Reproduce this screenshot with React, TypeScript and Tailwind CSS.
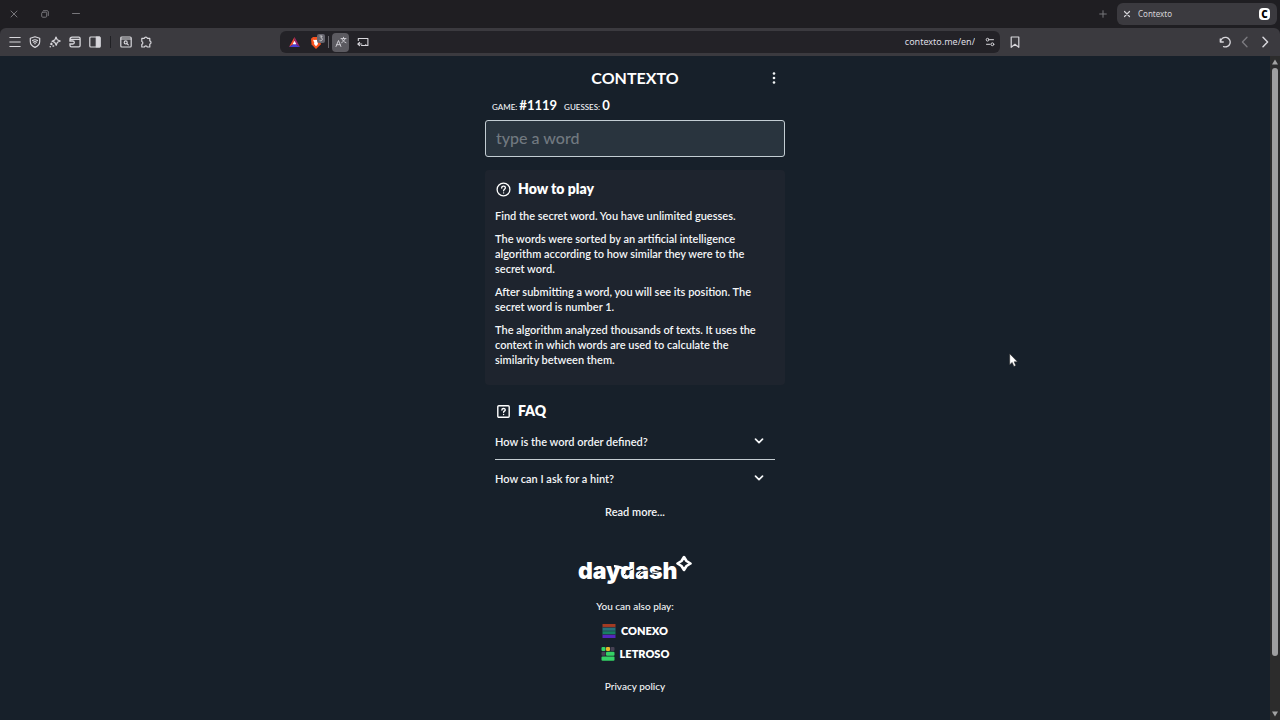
import type { ReactNode } from "react";

function Icon({ className, box = "0 0 24 24", width = 2, children }: { className?: string; box?: string; width?: number; children: ReactNode }) {
  return (
    <svg className={className} viewBox={box} fill="none" stroke="currentColor" strokeWidth={width} strokeLinecap="round" strokeLinejoin="round" aria-hidden="true">
      {children}
    </svg>
  );
}

function ToolButton({ label, className = "", children }: { label: string; className?: string; children: ReactNode }) {
  return (
    <button type="button" aria-label={label} className={`flex h-5 w-5 shrink-0 items-center justify-center ${className}`}>
      {children}
    </button>
  );
}

function TabStrip() {
  return (
    <div className="flex h-7 items-center justify-between bg-[#1f1e22] pr-[3px] pl-1 text-[#77767b]">
      <div className="flex gap-[11px]">
        <ToolButton label="Close window">
          <Icon className="h-2 w-2" box="0 0 8 8" width={1}><path d="M1 1l6 6M7 1L1 7" /></Icon>
        </ToolButton>
        <ToolButton label="Restore window">
          <Icon className="h-2 w-2" box="0 0 8 8" width={1}>
            <rect x="0.7" y="2.2" width="5" height="5" rx="1" />
            <path d="M2.5.7h3.7a1.1 1.1 0 0 1 1.1 1.1v3.7" />
          </Icon>
        </ToolButton>
        <ToolButton label="Minimize window">
          <Icon className="h-2 w-2" box="0 0 8 8" width={1}><path d="M.5 3.5h7" /></Icon>
        </ToolButton>
      </div>
      <div className="flex items-center gap-1">
        <ToolButton label="New tab">
          <Icon className="h-2 w-2" box="0 0 8 8" width={1}><path d="M4 .7v6.6M.7 4h6.6" /></Icon>
        </ToolButton>
        <div className="flex h-[22px] w-40 items-center rounded-md bg-[#3b3a3f] pr-[7px] text-[#d5d4d8]">
          <ToolButton label="Close tab">
            <Icon className="h-2 w-2" box="0 0 8 8" width={1.2}><path d="M1.5 1.5l5 5M6.5 1.5l-5 5" /></Icon>
          </ToolButton>
          <span className="ml-px flex-1 font-['Noto_Sans',sans-serif] text-[8px] leading-3">Contexto</span>
          <span className="flex h-3 w-[11px] items-center justify-center rounded-sm bg-white font-['Open_Sans',sans-serif] text-[10px] leading-3 font-extrabold text-black">C</span>
        </div>
      </div>
    </div>
  );
}

function Toolbar() {
  return (
    <div className="flex h-7 items-center rounded-t-md bg-[#3b3a3f] px-[5px] text-[#d8d7dc]">
      <div className="flex flex-1 items-center">
        <ToolButton label="Menu">
          <Icon className="h-3 w-3" box="0 0 12 12" width={1}><path d="M.8 1.5h10.4M.8 6h10.4M.8 10.5h10.4" /></Icon>
        </ToolButton>
        <ToolButton label="Protection">
          <Icon className="h-3 w-3" box="0 0 12 12" width={1.2}>
            <path d="M6 .7l4.7 1.5v3.3c0 2.8-1.8 4.7-4.7 5.9-2.9-1.2-4.7-3.1-4.7-5.9V2.2z" />
            <path d="M3.6 4.6c1.4-1 3.4-1 4.8 0M4.4 6.2c.9-.7 2.3-.7 3.2 0M5.8 7.7h.4" />
          </Icon>
        </ToolButton>
        <ToolButton label="Assistant">
          <Icon className="h-3 w-3" box="0 0 12 12" width={1.2}>
            <path d="M7 1l1.2 2.8L11.2 5 8.4 6.2 7.2 9.3 5.9 6.4 3 5.2l2.9-1.3z" />
            <path d="M2.4 7.2v1.4M1.7 7.9h1.4M1.2 10.8h.1M4 10h.6" strokeWidth="1.5" />
          </Icon>
        </ToolButton>
        <ToolButton label="Wallet">
          <Icon className="h-3 w-3" box="0 0 12 12" width={1.3}>
            <path d="M1 4.6V3.4C1 2 2.2 1.2 3.2 1.2h6.6c.8 0 1.3.6 1.3 1.3v7c0 .8-.5 1.3-1.3 1.3H2.4c-.8 0-1.4-.5-1.4-1.3v-.6M1.8 3.4h9.2M.8 5h3a1.4 1.4 0 0 1 0 3h-3" />
          </Icon>
        </ToolButton>
        <ToolButton label="Sidebar">
          <Icon className="h-3 w-3" box="0 0 12 12" width={1.2}>
            <rect x=".8" y="1" width="10.4" height="10" rx="1" />
            <path d="M7.3 1h3.4v10H7.3z" fill="currentColor" />
          </Icon>
        </ToolButton>
        <span className="mx-[5px] h-3 w-px bg-[#202024]" />
        <ToolButton label="Search tabs">
          <Icon className="h-3 w-3" box="0 0 12 12" width={1.2}>
            <rect x=".8" y="1" width="10.4" height="10" rx="1" />
            <path d="M1 3h10" />
            <circle cx="5.7" cy="6.4" r="1.5" />
            <path d="M7 7.7l1.3 1.2" />
          </Icon>
        </ToolButton>
        <ToolButton label="Extensions">
          <Icon className="h-3 w-3" box="0 0 12 12" width={1.2}>
            <path d="M1.8 2.4h2.5a1.6 1.6 0 0 1 3.1 0h2.4v2.5a1.6 1.6 0 0 1 0 3.1v3H7.3a1.5 1.5 0 0 0-2.9 0H1.8V8.4a1.6 1.6 0 0 0 0-3z" />
          </Icon>
        </ToolButton>
      </div>

      <div className="flex h-[22px] w-[56.25vw] items-center rounded-md bg-[#232227] pl-1">
        <ToolButton label="Rewards">
          <svg className="h-[10px] w-[11px]" viewBox="0 0 11 10" aria-hidden="true">
            <path d="M5.5 0L0 10l5.5-3.4z" fill="#f04a2d" />
            <path d="M5.5 0L11 10 5.5 6.6z" fill="#9b2470" />
            <path d="M0 10l5.5-3.4L11 10z" fill="#4b3bd0" />
            <path d="M5.5 3.8L3.6 7.3h3.8z" fill="#fff" />
          </svg>
        </ToolButton>
        <ToolButton label="Shields" className="ml-[3px]">
          <svg className="h-[17px] w-[15px]" viewBox="0 0 15 17" aria-hidden="true">
            <path d="M1 4.7L3 3h6l2.2 1.7-.5 5.8L6 15l-4.4-4.5z" fill="#f4511e" />
            <path d="M3 5.7l2 .4 1-.3 1 .3 2-.4-1.3 3L8 10l-2 2.2L4 10l.3-1.3z" fill="#fff" />
            <rect x="7" y="0" width="8" height="9" rx="2" fill="#65646d" />
            <path d="M9.6 2h2.6l-1.3 1.9c2 0 1.8 2.9-.2 2.9l-1.1-.4" fill="none" stroke="#ddd" strokeWidth=".8" />
          </svg>
        </ToolButton>
        <span className="ml-px h-3 w-px bg-[#68676d]" />
        <button type="button" aria-label="Translate" className="ml-[3px] flex h-[19px] w-[17px] items-center justify-center rounded-sm bg-[#5b5a60]">
          <Icon className="h-3 w-3" box="0 0 12 12" width={0.9}>
            <path d="M1 10.5l2.5-6 2.4 6M1.8 8.7h3.4M6 2.6h5M8.5 1.3v1.3M10 2.6c-.6 2-2 3.2-3.3 4M7 2.8c.6 1.7 1.8 3 4 3.9" />
          </Icon>
        </button>
        <ToolButton label="Send to device" className="ml-1">
          <Icon className="h-[10px] w-3" box="0 0 12 10" width={1.1}>
            <path d="M1.3 3.5V1.5h9.6v7H4.5M.8 7h4M2.6 5.4L.9 7l1.7 1.6M8.8 8.5v-1" />
          </Icon>
        </ToolButton>
        <input aria-label="Address" type="text" defaultValue="contexto.me/en/" className="ml-2 min-w-0 flex-1 bg-transparent text-right font-['Noto_Sans',sans-serif] text-[9px] leading-4 text-[#dedde2] outline-none" />
        <ToolButton label="Site settings" className="ml-[5px]">
          <Icon className="h-[10px] w-[10px]" box="0 0 10 10" width={1}>
            <circle cx="2.6" cy="2.7" r="1.4" />
            <path d="M5 2.7h3.5M1.5 7.3H5" />
            <circle cx="7.4" cy="7.3" r="1.4" />
          </Icon>
        </ToolButton>
      </div>

      <div className="flex flex-1 items-center">
        <ToolButton label="Bookmark" className="ml-[5px]">
          <Icon className="h-3 w-3" box="0 0 12 12" width={1.2}><path d="M2.2 1h7.6v10.3L6 8.3l-3.8 3z" /></Icon>
        </ToolButton>
        <span className="flex-1" />
        <ToolButton label="Reload">
          <Icon className="h-3 w-3" box="0 0 12 12" width={1.3}>
            <path d="M1.3 3v3h3M1.6 5.8A4.8 4.8 0 1 1 4.6 10.6" />
          </Icon>
        </ToolButton>
        <ToolButton label="Back" className="text-[#7c7b80]">
          <Icon className="h-3 w-3" box="0 0 12 12" width={1.3}><path d="M8 1.2L3.4 6 8 10.8" /></Icon>
        </ToolButton>
        <ToolButton label="Forward">
          <Icon className="h-3 w-3" box="0 0 12 12" width={1.5}><path d="M4 1.2L8.6 6 4 10.8" /></Icon>
        </ToolButton>
      </div>
    </div>
  );
}

const rules = [
  "Find the secret word. You have unlimited guesses.",
  "The words were sorted by an artificial intelligence algorithm according to how similar they were to the secret word.",
  "After submitting a word, you will see its position. The secret word is number 1.",
  "The algorithm analyzed thousands of texts. It uses the context in which words are used to calculate the similarity between them.",
];

function Question({ children }: { children: string }) {
  return (
    <button type="button" className="flex h-9 w-full items-center justify-between pr-[11px] text-left">
      <span>{children}</span>
      <Icon className="h-[10px] w-[10px]" box="0 0 10 10" width={1.7}><path d="M1.5 3.2L5 6.7l3.5-3.5" /></Icon>
    </button>
  );
}

function DaydashLogo() {
  return (
    <a href="#daydash" className="relative mt-9 flex h-[30px] w-[114px] items-start font-['Inter',sans-serif] text-[23px] font-black text-white">
      <span className="leading-8">daydash</span>
      <svg className="absolute top-0 right-0 h-[30px] w-[114px]" viewBox="0 0 114 30" aria-hidden="true">
        <path d="M36 11.3c7-.8 9.500 5.500 17 1.300" fill="none" stroke="#fff" strokeWidth="2.600" />
        <path d="M46 20c3-2 5-5 9-6M60 20c2-3 5-5 10-5M74 17c3 .8 6 .5 10-1.500" fill="none" stroke="#17202a" strokeWidth="1" />
        <path d="M106 2L108.500 6l4 2.500-4 2.500-2.500 4-2.500-4-4-2.500 4-2.500z" fill="#17202a" stroke="#fff" strokeWidth="2.600" strokeLinejoin="round" />
      </svg>
    </a>
  );
}

function Game() {
  return (
    <main className="flex flex-1 flex-col items-center text-[11px] leading-[15px] font-semibold text-[#f3f5f7]">
      <div className="flex w-[300px] flex-col">
        <header className="grid h-[42px] grid-cols-[1fr_auto_1fr] items-center pt-[2px]">
          <span />
          <h1 className="text-[16px] leading-6 font-bold text-white">CONTEXTO</h1>
          <button type="button" aria-label="Options" className="mr-1 flex h-5 w-[14px] items-center justify-center justify-self-end">
            <svg className="h-3 w-1" viewBox="0 0 4 12" fill="currentColor" aria-hidden="true">
              <circle cx="2" cy="1.5" r="1.3" /><circle cx="2" cy="6" r="1.3" /><circle cx="2" cy="10.5" r="1.3" />
            </svg>
          </button>
        </header>
        <div className="flex h-[22px] items-baseline gap-[7px] px-[7px] text-[8px] font-medium">
          <p>GAME: <b className="text-[13px] font-bold text-white">#1119</b></p>
          <p>GUESSES: <b className="text-[13px] font-bold text-white">0</b></p>
        </div>
        <input type="text" aria-label="Word" placeholder="type a word" className="h-[37px] w-full rounded-[3px] border border-[#c3cdd3] bg-[#29343e] px-[10px] pb-[2px] text-[16px] font-medium text-white outline-none placeholder:text-[#717980]" />

        <section className="mt-[13px] h-[215px] rounded-[4px] bg-[#1e242e] px-[10px] pt-[9px]">
          <h2 className="flex items-center gap-[7px] pl-px text-[14px] leading-5 font-extrabold text-white">
            <Icon className="h-[15px] w-[15px]" box="0 0 15 15" width={1.3}>
              <circle cx="7.5" cy="7.5" r="6.4" />
              <path d="M5.7 6c0-2.6 3.7-2.4 3.7-.2 0 1.3-1.8 1.5-1.8 3M7.6 10.8v.1" />
            </Icon>
            How to play
          </h2>
          <div className="mt-[9px] flex flex-col gap-2 pr-2">
            {rules.map((rule) => <p key={rule}>{rule}</p>)}
          </div>
        </section>

        <section className="px-[10px] pt-4">
          <h2 className="flex items-center gap-[7px] pl-px text-[14px] leading-5 font-extrabold text-white">
            <Icon className="h-[15px] w-[15px]" box="0 0 15 15" width={1.4}>
              <rect x="1.8" y="1.8" width="11.4" height="11.4" rx="1" />
              <path d="M5.9 6.1c0-2.2 3.3-2.1 3.3-.2 0 1.2-1.6 1.3-1.6 2.4M7.6 10.4v.1" />
            </Icon>
            FAQ
          </h2>
          <div className="mt-[2px] border-b border-[#c4ccd1]"><Question>How is the word order defined?</Question></div>
          <Question>How can I ask for a hint?</Question>
          <button type="button" className="mt-2 block w-full text-center">Read more...</button>
        </section>
      </div>

      <DaydashLogo />
      <p className="mt-[14px] text-[10px] font-medium">You can also play:</p>
      <nav className="mt-[5px] flex flex-col items-center text-[11px] font-extrabold text-white">
        <a href="#conexo" className="flex h-[23px] items-center gap-[5px]">
          <svg className="h-[14px] w-[14px]" viewBox="0 0 14 14" aria-hidden="true">
            <path d="M.5 0h13v3.5H.5z" fill="#a33b22" /><path d="M.5 3.5h13V7H.5z" fill="#26727a" /><path d="M.5 7h13v3.5H.5z" fill="#178062" /><path d="M.5 10.5h13V14H.5z" fill="#5426bd" />
            <path d="M.5 3.4h13M.5 7h13M.5 10.5h13" stroke="#263044" strokeWidth=".6" />
          </svg>
          CONEXO
        </a>
        <a href="#letroso" className="flex h-[23px] items-center gap-[5px]">
          <svg className="h-[14px] w-[14px]" viewBox="0 0 14 14" aria-hidden="true">
            <rect x=".5" width="4" height="4" rx="1" fill="#35d266" /><rect x="5" width="4" height="4" rx="1" fill="#e6b52a" /><rect x="9.5" width="4" height="4" rx="1" fill="#464153" />
            <rect x=".5" y="4.8" width="4" height="4" rx="1" fill="#464153" /><rect x="5" y="4.8" width="8.5" height="4" rx="1" fill="#35d266" />
            <rect x=".5" y="9.6" width="13" height="4.2" rx="1" fill="#35d266" />
          </svg>
          LETROSO
        </a>
      </nav>
      <a href="#privacy" className="mt-[14px] mb-5 text-[10px] font-medium">Privacy policy</a>
    </main>
  );
}

function Scrollbar() {
  return (
    <div className="flex w-[10px] flex-col items-center bg-[#2c2c2c] py-[3px] text-[#a3a3a3]" aria-hidden="true">
      <svg className="h-[6px] w-[6px]" viewBox="0 0 6 6" fill="currentColor"><path d="M3 .5L6 5.5H0z" /></svg>
      <div className="mt-[3px] mb-[55px] w-[6px] flex-1 rounded-full bg-[#9f9fa0]" />
      <svg className="h-[6px] w-[6px]" viewBox="0 0 6 6" fill="currentColor"><path d="M0 .5h6L3 5.5z" /></svg>
    </div>
  );
}

export default function App() {
  return (
    <div className="relative flex min-h-screen flex-col bg-[#1f1e22] font-['Lato',sans-serif]">
      <TabStrip />
      <Toolbar />
      <div className="flex flex-1 bg-[#17202a]">
        <Game />
        <Scrollbar />
      </div>
      <svg className="absolute top-[353px] left-[1009px] h-[14px] w-[9px]" viewBox="0 0 9 14" aria-hidden="true">
        <path d="M.7.7v11l2.5-2.3 1.7 4 1.9-.8-1.7-3.8h3.4z" fill="#fff" stroke="#222" strokeWidth=".5" />
      </svg>
    </div>
  );
}
